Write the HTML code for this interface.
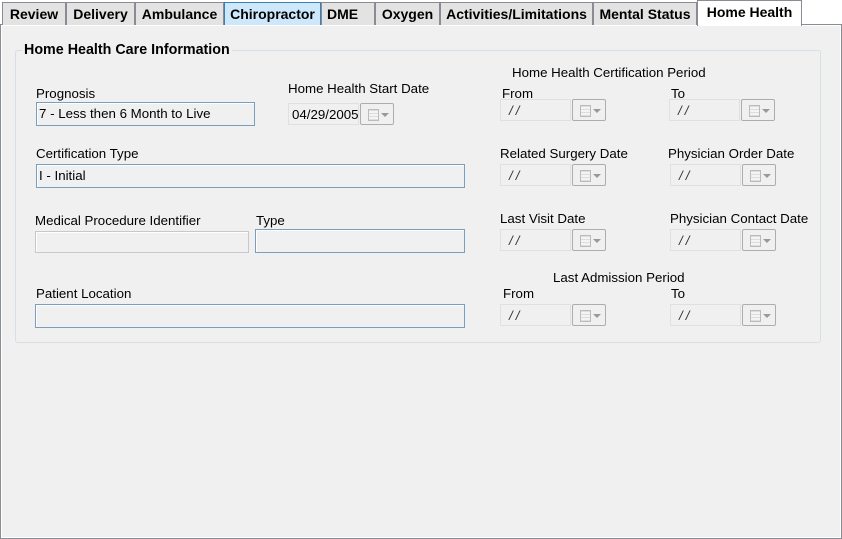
<!DOCTYPE html>
<html><head><style>
*{box-sizing:border-box;margin:0;padding:0}
body{width:842px;height:539px;background:#fff;position:relative;overflow:hidden;font-family:"Liberation Sans",Arial,sans-serif;font-size:13.3px;color:#000}
.a{position:absolute;white-space:nowrap}
.tab{position:absolute;top:2px;height:23px;background:#e3e3e3;border:1px solid #898c95;border-bottom:none;font-weight:bold;font-size:14px;padding-top:3px;text-align:center;white-space:nowrap}
.panel{position:absolute;left:0;top:24px;width:842px;height:515px;background:#f0f0f0;border:1px solid #898c95;box-shadow:inset 1px 1px 0 #fff,inset -1px -1px 0 #fff}
.grp{position:absolute;left:15px;top:50px;width:806px;height:293px;border:1px solid #d5dfe5;border-radius:3px}
.box{position:absolute;background:#f0f0f0;border:1px solid #7a9ebd;box-shadow:inset 1px 1px 0 #fff;padding:3px 0 0 2px;font-size:13.3px}
.gbox{position:absolute;background:#f0f0f0;border:1px solid #c8c8c8;box-shadow:inset 1px 1px 0 #fff}
.d{position:absolute;width:71px;height:22px;border:1px solid #e0e0e0;background:#f0f0f0;padding:3px 0 0 8px;font-style:italic;color:#333;white-space:pre;letter-spacing:3px}
.btn{position:absolute;width:34px;height:22px;border:1px solid #adadad;background:#f0f0f0;border-radius:2px}
.btn:before{content:"";position:absolute;left:7px;top:5px;width:9px;height:10px;border:1px solid #bbb;background:repeating-linear-gradient(0deg,#ddd 0 1px,#f4f4f4 1px 3px)}
.btn:after{content:"";position:absolute;left:20px;top:9px;border:4px solid transparent;border-top-color:#999;border-bottom:none}
</style></head><body>
<div class="panel"></div>
<div class="tab" style="left:2px;width:64px">Review</div>
<div class="tab" style="left:66px;width:69px">Delivery</div>
<div class="tab" style="left:135px;width:89px">Ambulance</div>
<div class="tab" style="left:224px;width:97px;background:#cde8fb;border-color:#3c7fb1">Chiropractor</div>
<div class="tab" style="left:321px;width:54px;text-align:left;padding-left:5px">DME</div>
<div class="tab" style="left:375px;width:65px">Oxygen</div>
<div class="tab" style="left:440px;width:153px">Activities/Limitations</div>
<div class="tab" style="left:593px;width:104px">Mental Status</div>
<div class="tab" style="left:697px;top:0;width:105px;height:26px;background:#fff;border-color:#898c95;padding-top:3px">Home Health</div>

<div class="grp"></div>
<div class="a" style="left:22px;top:42px;background:#f0f0f0;padding:0 2px;font-weight:bold;font-size:14.3px">Home Health Care Information</div>

<div class="a" style="left:36px;top:86px">Prognosis</div>
<div class="box" style="left:36px;top:102px;width:219px;height:24px">7 - Less then 6 Month to Live</div>
<div class="a" style="left:288px;top:81px">Home Health Start Date</div>
<div class="d" style="left:288px;top:103px;width:71px;border-color:#e0e0e0;font-style:normal;color:#000;padding-left:3px;letter-spacing:0">04/29/2005</div>
<div class="btn" style="left:360px;top:103px"></div>

<div class="a" style="left:512px;top:65px">Home Health Certification Period</div>
<div class="a" style="left:502px;top:86px">From</div>
<div class="a" style="left:671px;top:86px">To</div>
<div class="d" style="left:500px;top:99px">//</div><div class="btn" style="left:572px;top:99px"></div>
<div class="d" style="left:669px;top:99px">//</div><div class="btn" style="left:741px;top:99px"></div>

<div class="a" style="left:36px;top:146px">Certification Type</div>
<div class="box" style="left:36px;top:164px;width:429px;height:24px">I - Initial</div>
<div class="a" style="left:500px;top:146px">Related Surgery Date</div>
<div class="a" style="left:668px;top:146px">Physician Order Date</div>
<div class="d" style="left:500px;top:164px">//</div><div class="btn" style="left:572px;top:164px"></div>
<div class="d" style="left:670px;top:164px">//</div><div class="btn" style="left:742px;top:164px"></div>

<div class="a" style="left:35px;top:213px">Medical Procedure Identifier</div>
<div class="a" style="left:256px;top:213px">Type</div>
<div class="gbox" style="left:35px;top:231px;width:214px;height:22px"></div>
<div class="box" style="left:255px;top:229px;width:210px;height:24px"></div>
<div class="a" style="left:500px;top:211px">Last Visit Date</div>
<div class="a" style="left:670px;top:211px">Physician Contact Date</div>
<div class="d" style="left:500px;top:229px">//</div><div class="btn" style="left:572px;top:229px"></div>
<div class="d" style="left:670px;top:229px">//</div><div class="btn" style="left:742px;top:229px"></div>

<div class="a" style="left:36px;top:286px">Patient Location</div>
<div class="box" style="left:35px;top:304px;width:430px;height:24px"></div>
<div class="a" style="left:553px;top:270px">Last Admission Period</div>
<div class="a" style="left:503px;top:286px">From</div>
<div class="a" style="left:671px;top:286px">To</div>
<div class="d" style="left:500px;top:304px">//</div><div class="btn" style="left:572px;top:304px"></div>
<div class="d" style="left:670px;top:304px">//</div><div class="btn" style="left:742px;top:304px"></div>
</body></html>
